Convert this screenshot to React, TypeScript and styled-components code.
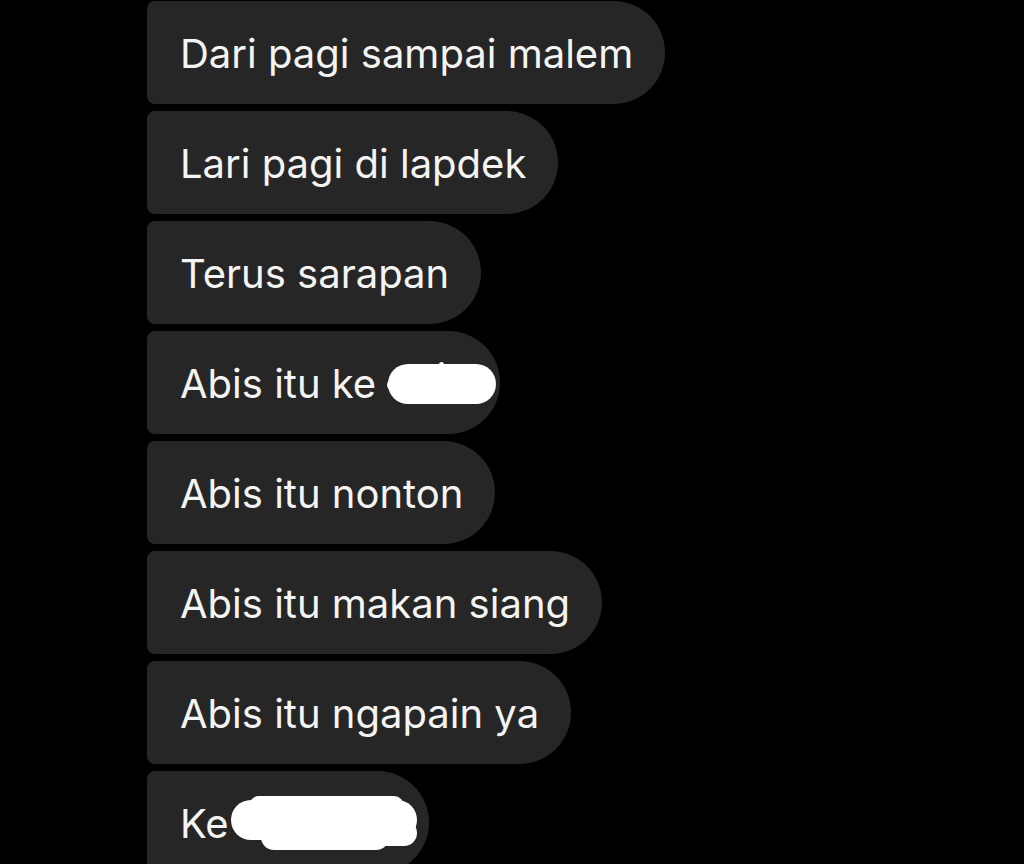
import React from "react";
import styled, { createGlobalStyle } from "styled-components";

const GlobalStyle = createGlobalStyle`
  html, body {
    margin: 0;
    padding: 0;
    background: #000;
    overflow: hidden;
  }
  body {
    font-family: Inter, "Noto Sans", "Liberation Sans", sans-serif;
  }
`;

const Screen = styled.div`
  width: 1024px;
  height: 864px;
  background: #000;
  overflow: hidden;
`;

const Thread = styled.div`
  display: flex;
  flex-direction: column;
  align-items: flex-start;
  gap: 7px;
  padding: 1px 0 0 147px;
`;

const Bubble = styled.div`
  box-sizing: border-box;
  display: flex;
  align-items: center;
  height: 103px;
  padding: 1px 32px 0 33px;
  background: #262626;
  color: #f4f4f4;
  border-radius: 8px 52px 52px 8px;
  font-size: 40px;
  letter-spacing: 0;
  white-space: nowrap;
  flex-shrink: 0;
`;

const Scribble = styled.svg<{ $gap: number; $overhang: number }>`
  display: inline-block;
  vertical-align: middle;
  margin-left: ${(p) => p.$gap}px;
  margin-right: -${(p) => p.$overhang}px;
  flex-shrink: 0;
`;

const SmallScribble = () => (
  <Scribble $gap={11} $overhang={29} width={110} height={44} viewBox="0 0 110 44">
    <rect x="1" y="3" width="108" height="40" rx="20" fill="#fff" />
    <rect x="52" y="1" width="5" height="6" rx="2.5" fill="#fff" />
    <circle cx="6" cy="24" r="6" fill="#fff" />
  </Scribble>
);

const BigScribble = () => (
  <Scribble $gap={2} $overhang={22} width={188} height={58} viewBox="0 0 188 58">
    <rect x="0" y="6" width="186" height="40" rx="20" fill="#fff" />
    <rect x="18" y="2" width="155" height="20" rx="10" fill="#fff" />
    <rect x="30" y="30" width="128" height="26" rx="13" fill="#fff" />
    <rect x="140" y="26" width="46" height="26" rx="13" fill="#fff" />
  </Scribble>
);

const Text = styled.span`
  display: inline-block;
`;

const messages: { text: string; scribble?: "small" | "big" }[] = [
  { text: "Dari pagi sampai malem" },
  { text: "Lari pagi di lapdek" },
  { text: "Terus sarapan" },
  { text: "Abis itu ke", scribble: "small" },
  { text: "Abis itu nonton" },
  { text: "Abis itu makan siang" },
  { text: "Abis itu ngapain ya" },
  { text: "Ke", scribble: "big" },
];

export default function App() {
  return (
    <Screen>
      <GlobalStyle />
      <Thread>
        {messages.map((m, i) => (
          <Bubble key={i}>
            <Text>{m.text}</Text>
            {m.scribble === "small" && <SmallScribble />}
            {m.scribble === "big" && <BigScribble />}
          </Bubble>
        ))}
      </Thread>
    </Screen>
  );
}
